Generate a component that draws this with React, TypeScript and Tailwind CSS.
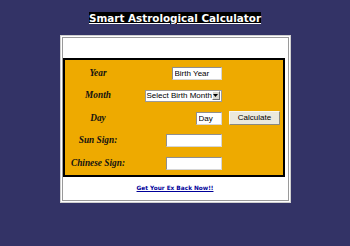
import React from "react";

const inputCls =
  "block h-[13px] border border-t-[#8f8f8f] border-l-[#8f8f8f] border-b-[#d6d6d6] border-r-[#d6d6d6] bg-white px-[2px] text-[8px] leading-[11px] text-black font-['Liberation_Sans',Arial,sans-serif] outline-none";

function Row({
  label,
  mid,
  right,
}: {
  label: string;
  mid: React.ReactNode;
  right?: React.ReactNode;
}) {
  return (
    <div className="flex h-[22.5px] items-center">
      <div className="w-[67px] text-center font-['Liberation_Serif',serif] text-[9.3px] font-bold italic leading-[11px] text-[#111]">
        {label}
      </div>
      <div className="flex flex-1 justify-end pr-[5px]">{mid}</div>
      <div className="flex w-[56px] justify-center">{right}</div>
    </div>
  );
}

export default function App() {
  return (
    <div className="min-h-screen w-full overflow-hidden bg-[#333366]">
      <div className="flex justify-center pt-[12px]">
        <span className="bg-black font-['DejaVu_Sans',Verdana,sans-serif] text-[10.4px] font-bold leading-[12px] text-white underline">
          Smart Astrological Calculator
        </span>
      </div>
      <div className="mx-auto mt-[11px] h-[168px] w-[231px] border border-[#cfcfcf] bg-white p-[1px]">
        <div className="flex h-full flex-col border border-[#9a9a9a] bg-white">
          <div className="mr-[3px] mt-[20px] border-2 border-black bg-[#eeaa00] pt-[2px]">
            <Row
              label="Year"
              mid={<input readOnly defaultValue="Birth Year" className={inputCls + " w-[50px]"} />}
            />
            <Row
              label="Month"
              mid={
                <div className="flex h-[12px] w-[77px] items-center overflow-hidden border border-[#9a9a9a] bg-white">
                  <span className="min-w-0 flex-1 overflow-hidden whitespace-nowrap pl-[1px] font-['Liberation_Sans',Arial,sans-serif] text-[8px] leading-[10px] text-black">
                    Select Birth Month
                  </span>
                  <span className="mr-[1px] flex h-[9px] w-[8px] shrink-0 items-center justify-center border border-t-white border-l-white border-b-[#707070] border-r-[#707070] bg-[#dcd9d0]">
                    <svg width="5" height="3" viewBox="0 0 5 3">
                      <path d="M0 0 H5 L2.5 3 Z" fill="#000" />
                    </svg>
                  </span>
                </div>
              }
            />
            <Row
              label="Day"
              mid={<input readOnly defaultValue="Day" className={inputCls + " w-[26px]"} />}
              right={
                <button className="h-[14px] w-[51px] rounded-[1px] border border-t-[#f8f8f4] border-l-[#f8f8f4] border-b-[#8a8a80] border-r-[#8a8a80] bg-[#ebe9dd] font-['Liberation_Sans',Arial,sans-serif] text-[8px] leading-[12px] text-black">
                  Calculate
                </button>
              }
            />
            <Row
              label="Sun Sign:"
              mid={<input readOnly defaultValue="" className={inputCls + " w-[56px]"} />}
            />
            <Row
              label="Chinese Sign:"
              mid={<input readOnly defaultValue="" className={inputCls + " w-[56px]"} />}
            />
          </div>
          <div className="mt-[3.5px] text-center leading-[8px]">
            <a
              href="#"
              className="font-['DejaVu_Sans',Verdana,sans-serif] text-[5.8px] font-bold text-[#000099] underline"
            >
              Get Your Ex Back Now!!
            </a>
          </div>
        </div>
      </div>
    </div>
  );
}
